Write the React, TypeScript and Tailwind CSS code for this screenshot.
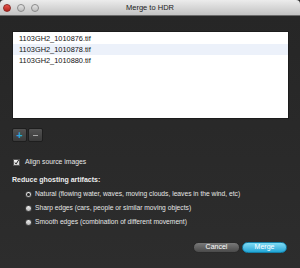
import React from "react";

const files = ["1103GH2_1010876.tif", "1103GH2_1010878.tif", "1103GH2_1010880.tif"];

const options = [
  "Natural (flowing water, waves, moving clouds, leaves in the wind, etc)",
  "Sharp edges (cars, people or similar moving objects)",
  "Smooth edges (combination of different movement)",
];

function Light({ color }: { color: string }) {
  return <div className={`w-[8px] h-[8px] rounded-full border border-[#8a8a8a] ${color}`} />;
}

export default function App() {
  const selected = 0;
  return (
    <div
      className="w-[300px] h-[268px] bg-[#2b2b2b] flex flex-col overflow-hidden"
      style={{ fontFamily: '"Liberation Sans", Arial, sans-serif' }}
    >
      {/* Title bar */}
      <div className="h-[16px] rounded-t-[4px] bg-gradient-to-b from-[#ececec] to-[#c2c2c2] border-b border-[#6a6a6a] flex items-center relative">
        <div className="flex items-center gap-[6px] pl-[3px]">
          <div className="w-[8px] h-[8px] rounded-full bg-gradient-to-b from-[#e8554d] to-[#b3211b] border border-[#8c2a25]" />
          <Light color="bg-gradient-to-b from-[#e4e4e4] to-[#bcbcbc]" />
          <Light color="bg-gradient-to-b from-[#e4e4e4] to-[#bcbcbc]" />
        </div>
        <div className="absolute inset-0 flex items-center justify-center text-[7.5px] text-[#222]">Merge to HDR</div>
      </div>

      <div className="flex-1 flex flex-col px-[12px] pt-[15px] bg-gradient-to-b from-[#262626] to-[#2d2d2d]">
        {/* File list */}
        <div className="w-[277px] h-[88px] bg-white border border-[#1c1c1c] pt-[1px]">
          {files.map((f, i) => (
            <div
              key={f}
              className={`h-[11px] flex items-center pl-[6px] text-[7.4px] text-[#111] ${i === 1 ? "bg-[#ecf1fa]" : ""}`}
            >
              {f}
            </div>
          ))}
        </div>

        {/* + / - */}
        <div className="flex gap-[1px] mt-[9px]">
          <div className="w-[15px] h-[14px] rounded-[2px] bg-gradient-to-b from-[#525252] to-[#3a3a3a] border border-[#1e1e1e] flex items-center justify-center">
            <span className="text-[#2aa9dc] text-[11px] font-bold leading-none">+</span>
          </div>
          <div className="w-[15px] h-[14px] rounded-[2px] bg-gradient-to-b from-[#525252] to-[#3a3a3a] border border-[#1e1e1e] flex items-center justify-center">
            <div className="w-[5px] h-[1px] bg-[#a8a8a8]" />
          </div>
        </div>

        {/* Align checkbox */}
        <div className="h-[11px] mt-[15px] flex items-center gap-[5px] pl-[1px]">
          <div className="w-[7px] h-[7px] bg-gradient-to-b from-[#f4f4f4] to-[#cfcfcf] border border-[#555] flex items-center justify-center">
            <svg width="7" height="7" viewBox="0 0 7 7">
              <path d="M1 3.5 L3 5.5 L6.5 0" stroke="#111" strokeWidth="1.3" fill="none" />
            </svg>
          </div>
          <span className="text-[6.8px] text-[#e8e8e8]">Align source images</span>
        </div>

        {/* Ghosting */}
        <div className="h-[11px] mt-[7px] flex items-center text-[7px] font-bold text-[#ededed]">
          Reduce ghosting artifacts:
        </div>
        <div className="flex flex-col gap-[3px] mt-[3px] pl-[13px]">
          {options.map((o, i) => (
            <div key={o} className="h-[11px] flex items-center gap-[3px]">
              <div className="w-[7px] h-[7px] rounded-full bg-gradient-to-b from-[#f2f2f2] to-[#b5b5b5] border border-[#4a4a4a] flex items-center justify-center">
                {i === selected && <div className="w-[3px] h-[3px] rounded-full bg-[#222]" />}
              </div>
              <span className="text-[6.7px] text-[#e6e6e6] whitespace-nowrap">{o}</span>
            </div>
          ))}
        </div>

        {/* Action buttons */}
        <div className="flex justify-end gap-[2px] mt-[14px] pr-[1px]">
          <div className="w-[47px] h-[11px] rounded-full bg-gradient-to-b from-[#7a7a7a] to-[#4a4a4a] border border-[#2a2a2a] flex items-center justify-center text-[7px] text-white">
            Cancel
          </div>
          <div className="w-[45px] h-[11px] rounded-full bg-gradient-to-b from-[#7fdcf5] to-[#1ba6d6] border border-[#1680a8] flex items-center justify-center text-[7px] text-white">
            Merge
          </div>
        </div>
      </div>
    </div>
  );
}
